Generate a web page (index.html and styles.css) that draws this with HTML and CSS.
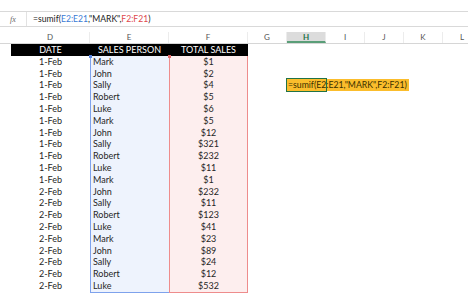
FILE: index.html
```html
<!DOCTYPE html>
<html lang="en">
<head>
  <meta charset="UTF-8">
  <title>SUMIF example</title>
  <link rel="stylesheet" href="styles.css">
</head>
<body>

  <div class="fbar">
    <div class="fx">fx</div>
    <div class="ftext">=sumif(<span class="ref-e">E2:E21</span>,"MARK",<span class="ref-f">F2:F21</span>)</div>
  </div>

  <div class="sheet">
    <div class="row colheads">
      <div class="rh"></div>
      <div class="ch">D</div>
      <div class="ch">E</div>
      <div class="ch">F</div>
      <div class="ch">G</div>
      <div class="ch active">H</div>
      <div class="ch">I</div>
      <div class="ch">J</div>
      <div class="ch">K</div>
      <div class="ch">L</div>
    </div>

    <div class="row thead">
      <div class="rh"></div>
      <div class="th">DATE</div>
      <div class="th">SALES PERSON</div>
      <div class="th">TOTAL SALES</div>
    </div>

    <div id="rows"></div>
  </div>

  <script>
    const data = [
      ['1-Feb', 'Mark', '$1'], ['1-Feb', 'John', '$2'], ['1-Feb', 'Sally', '$4'],
      ['1-Feb', 'Robert', '$5'], ['1-Feb', 'Luke', '$6'], ['1-Feb', 'Mark', '$5'],
      ['1-Feb', 'John', '$12'], ['1-Feb', 'Sally', '$321'], ['1-Feb', 'Robert', '$232'],
      ['1-Feb', 'Luke', '$11'], ['1-Feb', 'Mark', '$1'], ['2-Feb', 'John', '$232'],
      ['2-Feb', 'Sally', '$11'], ['2-Feb', 'Robert', '$123'], ['2-Feb', 'Luke', '$41'],
      ['2-Feb', 'Mark', '$23'], ['2-Feb', 'John', '$89'], ['2-Feb', 'Sally', '$24'],
      ['2-Feb', 'Robert', '$12'], ['2-Feb', 'Luke', '$532']
    ];

    const rows = document.getElementById('rows');
    data.forEach((r, i) => {
      const row = document.createElement('div');
      row.className = 'row';
      if (i === 0) row.classList.add('first');
      if (i === data.length - 1) row.classList.add('last');
      let h = '<div class="rh"></div>' +
        '<div class="c date">' + r[0] + '</div>' +
        '<div class="c person">' + r[1] + '</div>' +
        '<div class="c sales">' + r[2] + '</div>' +
        '<div class="c"></div>';
      if (i === 2) {
        h += '<div class="c sel"><span class="shown">=sumif(E2:E21,"MARK",F2:F21)</span></div>';
      } else {
        h += '<div class="c"></div>';
      }
      row.innerHTML = h;
      rows.appendChild(row);
    });
  </script>
</body>
</html>
```

FILE: styles.css
```css
html, body {
  margin: 0;
  padding: 0;
  background: #fff;
  color: #262626;
  font-family: Lato, "Liberation Sans", sans-serif;
  font-size: 9px;
  width: 468px;
  height: 297px;
  overflow: hidden;
}

.fbar {
  margin-top: 11px;
  height: 14px;
  border-top: 1px solid #d9d9d9;
  border-bottom: 1px solid #d9d9d9;
  display: flex;
  align-items: center;
}
.fx {
  width: 26px;
  height: 100%;
  border-right: 1px solid #e2e2e2;
  font-family: "Liberation Serif", serif;
  font-style: italic;
  color: #666;
  font-size: 8px;
  display: flex;
  align-items: center;
  justify-content: center;
}
.ftext {
  padding-left: 6px;
  font-size: 8.6px;
  color: #222;
}
.ref-e { color: #3a7bd5; }
.ref-f { color: #e0474c; }

.sheet {
  margin-top: 5px;
  width: 482px;
}
.row {
  display: grid;
  grid-template-columns: 11px 79px 79px 79px repeat(6, 39px);
  height: 11.8px;
  line-height: 11.8px;
}

.colheads {
  height: 11px;
  line-height: 11px;
  border-bottom: 1px solid #d6d6d6;
}
.ch {
  text-align: center;
  color: #555;
  border-right: 1px solid #ececec;
  font-size: 8px;
}
.ch.active {
  background: #dcdcdc;
  color: #217346;
  font-weight: bold;
  border-bottom: 2px solid #5a9e78;
  height: 9px;
  line-height: 10px;
}

.th {
  background: #000;
  color: #fff;
  text-align: center;
}

.c {
  white-space: nowrap;
}
.date {
  text-align: center;
}
.person {
  background: #eef3fd;
  border-left: 1px solid #7ea2ec;
  padding-left: 2px;
}
.sales {
  background: #fdeeee;
  border-left: 1px solid #ee8c8c;
  border-right: 1px solid #ee8c8c;
  text-align: center;
}
.last .person { border-bottom: 1px solid #7ea2ec; }
.last .sales { border-bottom: 1px solid #ee8c8c; }

.first .person, .first .sales {
  position: relative;
}
.first .person::before, .first .sales::before {
  content: "";
  position: absolute;
  left: -2px;
  top: -1px;
  width: 3px;
  height: 3px;
  background: #5a86e0;
}
.first .sales::before {
  background: #e46a6a;
}

.sel {
  position: relative;
  overflow: visible;
}
.sel .shown {
  background: #fbbd2c;
  color: #3a3000;
  font-size: 8.7px;
  padding: 0 2px 0 1px;
  display: inline-block;
  height: 12px;
  line-height: 12px;
}
.sel::after {
  content: "";
  position: absolute;
  left: -1px;
  top: -1px;
  width: 39px;
  height: 12px;
  border: 1px solid #217346;
}
```
